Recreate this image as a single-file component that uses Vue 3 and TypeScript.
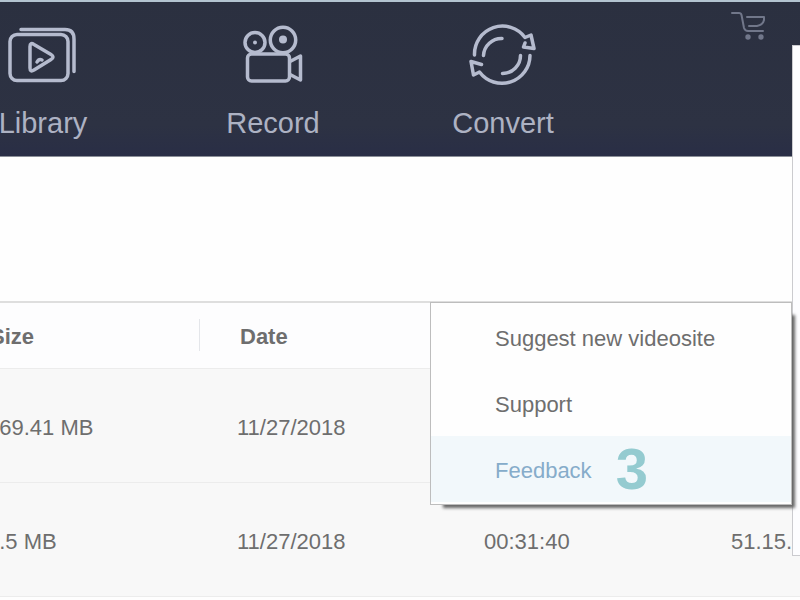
<script setup lang="ts">
interface Row {
  size: string
  date: string
  duration: string
  quality: string
}

const rows: Row[] = [
  { size: '469.41 MB', date: '11/27/2018', duration: '', quality: '' },
  { size: '1.5 MB', date: '11/27/2018', duration: '00:31:40', quality: '51.15...' },
]

const menuItems: string[] = ['Suggest new videosite', 'Support']
</script>

<template>
  <div class="window">
    <header class="toolbar">
      <nav class="tabs">
        <button type="button" class="tab">
          <svg class="tab-icon" viewBox="0 0 72 66" aria-hidden="true">
            <rect x="3" y="13.500" width="58" height="46" rx="7" />
            <path d="M14 8.500H58Q67 8.500 67 18V50.500" />
            <path d="M23 25.500Q23 21 27 23.500L44 33.500Q48 36 44 38.500L27 49Q23 51.500 23 47Z" />
            <path d="M30 41Q32 37.500 35 39" />
          </svg>
          <span>Library</span>
        </button>
        <button type="button" class="tab">
          <svg class="tab-icon" viewBox="0 0 72 66" aria-hidden="true">
            <circle cx="18" cy="21.500" r="10" />
            <circle cx="46" cy="19" r="12.700" />
            <circle class="dot" cx="18" cy="21.500" r="2" />
            <circle class="dot" cx="46" cy="18.500" r="4" />
            <rect x="10.500" y="33" width="42" height="27" rx="4" />
            <path d="M53 40.500L63.500 35V59L53 53.500" />
          </svg>
          <span>Record</span>
        </button>
        <button type="button" class="tab">
          <svg class="tab-icon" viewBox="0 0 72 66" aria-hidden="true">
            <path d="M7.500 34A28 28 0 0 1 58 16.500L64 14L67 27.500L56.500 26L58 22" />
            <path d="M63 34.500A28 28 0 0 1 12.500 51L6.500 54L4 40.500L14.500 43.500" />
            <path d="M16.500 34.500A18 18 0 0 1 35 17.500M53.500 34.500A18 18 0 0 1 35.500 52.500" />
          </svg>
          <span>Convert</span>
        </button>
      </nav>
      <button type="button" class="cart" aria-label="Cart">
        <svg viewBox="0 0 36 32" aria-hidden="true">
          <path d="M2 2H9Q11 2 11.500 4L14 17Q15 20 18 20H33" />
          <path d="M17 6H34V9Q33 14 27 15H19" />
          <circle cx="18" cy="26" r="2.700" />
          <circle cx="31" cy="26" r="2.700" />
        </svg>
      </button>
    </header>

    <main class="content">
      <table class="files">
        <colgroup>
          <col class="col-size" />
          <col class="col-wide" />
          <col class="col-wide" />
          <col />
        </colgroup>
        <thead>
          <tr>
            <th scope="col" class="divided">Size</th>
            <th scope="col">Date</th>
            <td></td>
            <td></td>
          </tr>
        </thead>
        <tbody>
          <tr v-for="row in rows" :key="row.size">
            <td>{{ row.size }}</td>
            <td>{{ row.date }}</td>
            <td>{{ row.duration }}</td>
            <td>{{ row.quality }}</td>
          </tr>
        </tbody>
      </table>
    </main>

    <aside class="side-panel"></aside>

    <div class="menu">
      <button v-for="item in menuItems" :key="item" type="button" class="menu-item">
        {{ item }}
      </button>
      <button type="button" class="menu-item active">
        Feedback <span class="step">3</span>
      </button>
    </div>
  </div>
</template>

<style>
body {
  background: #fefefe;
}
</style>

<style scoped>
.window {
  position: relative;
  min-height: 100vh;
  overflow: hidden;
  color: #6e6e6e;
  font-family: "Liberation Sans", Arial, sans-serif;
  font-size: 22px;
}

button {
  margin: 0;
  padding: 0;
  border: 0;
  background: none;
  color: inherit;
  font: inherit;
}

.toolbar {
  display: flex;
  justify-content: space-between;
  align-items: flex-start;
  box-sizing: border-box;
  height: 157px;
  border-top: 2px solid #b3c4d0;
  border-bottom: 1px solid #8b8f98;
  background: linear-gradient(#2b3040, #2d3243 80%, #292e46);
}

.tabs {
  display: flex;
  margin-left: -72px;
}

.tab {
  display: flex;
  flex-direction: column;
  align-items: center;
  gap: 18px;
  width: 230px;
  padding-top: 19px;
  color: #adb2c3;
  font-size: 29px;
  line-height: 36px;
}

.tab-icon {
  width: 72px;
  height: 66px;
  fill: none;
  stroke: #b5bbce;
  stroke-width: 3.500;
  stroke-linecap: round;
  stroke-linejoin: round;
}

.dot {
  fill: #b5bbce;
  stroke: none;
}

.cart {
  margin: 9px 34px 0 0;
}

.cart svg {
  display: block;
  width: 36px;
  height: 32px;
  fill: none;
  stroke: #71778a;
  stroke-width: 2;
  stroke-linecap: round;
  stroke-linejoin: round;
}

.cart circle {
  fill: #71778a;
  stroke: none;
}

.content {
  padding-top: 144px;
}

.files {
  width: calc(100% + 50px);
  margin-left: -50px;
  border-collapse: collapse;
  table-layout: fixed;
  border-top: 2px solid #dedede;
  white-space: nowrap;
}

.col-size {
  width: 250px;
}

.col-wide {
  width: 247px;
}

.files th,
.files td {
  box-sizing: border-box;
  padding: 6px 0 0 37px;
  text-align: left;
}

.files th {
  height: 66px;
  padding-top: 4px;
  padding-left: 40px;
}

.divided {
  background: linear-gradient(#e4e6ea, #e4e6ea) right center / 1px 32px no-repeat;
}

.files thead {
  background: #fdfdfe;
}

.files tbody tr {
  height: 114px;
  border-top: 1px solid #ececec;
  border-bottom: 1px solid #ececec;
  background: #f8f8f8;
}

.side-panel {
  position: absolute;
  top: 45px;
  right: 0;
  width: 7px;
  height: 509px;
  border: solid #cbcbcf;
  border-width: 1px 0 1px 1px;
  background: #fdfdff;
}

.menu {
  position: absolute;
  top: 302px;
  right: 8px;
  display: flex;
  flex-direction: column;
  box-sizing: border-box;
  width: 362px;
  padding: 1px 0 2px;
  border: 1px solid #bdbdbd;
  background: #fefefe;
  box-shadow: 8px 8px 3px -5px #666;
}

.menu-item {
  display: flex;
  align-items: center;
  gap: 24px;
  box-sizing: border-box;
  height: 66px;
  padding: 4px 0 0 64px;
  text-align: left;
}

.active {
  background: #f2f8fb;
  color: #86acca;
}

.step {
  color: #94cbd0;
  font-size: 58px;
  font-weight: bold;
  line-height: 60px;
  padding-bottom: 4px;
}
</style>
